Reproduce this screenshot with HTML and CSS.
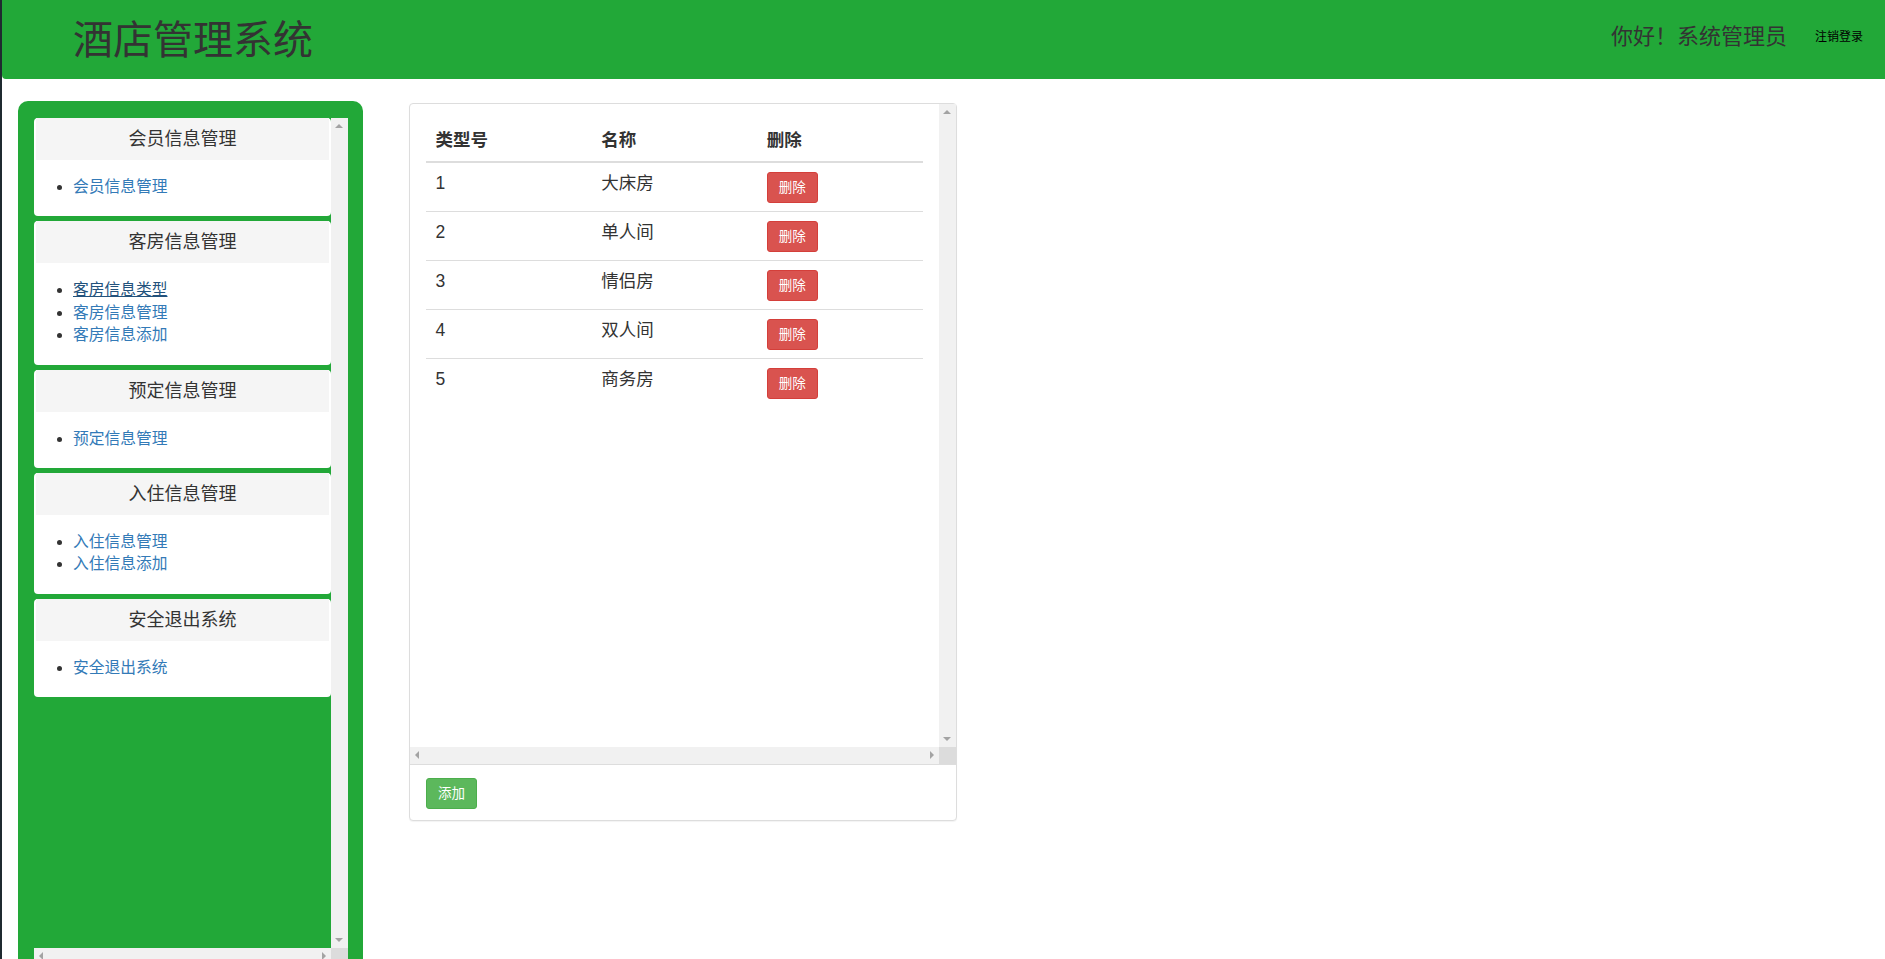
FILE: index.html
```html
<!DOCTYPE html>
<html lang="zh-CN">
<head>
  <meta charset="UTF-8" />
  <title>酒店管理系统</title>
  <link rel="stylesheet" href="styles.css">
</head>
<body>

  <!-- Top bar -->
  <header class="topbar">
    <h1 class="brand">酒店管理系统</h1>
    <div class="user">
      <span class="hello">你好！系统管理员</span>
      <a class="logout" href="#">注销登录</a>
    </div>
  </header>

  <div class="layout">

    <!-- Left menu -->
    <aside class="sidebar">
      <div class="scroll-box side-scroll">
        <div class="scroll-content">
          <div class="menu-panel">
            <div class="menu-heading">会员信息管理</div>
            <ul class="menu-list">
              <li><a href="#">会员信息管理</a></li>
            </ul>
          </div>
          <div class="menu-panel">
            <div class="menu-heading">客房信息管理</div>
            <ul class="menu-list">
              <li><a href="#" class="current">客房信息类型</a></li>
              <li><a href="#">客房信息管理</a></li>
              <li><a href="#">客房信息添加</a></li>
            </ul>
          </div>
          <div class="menu-panel">
            <div class="menu-heading">预定信息管理</div>
            <ul class="menu-list">
              <li><a href="#">预定信息管理</a></li>
            </ul>
          </div>
          <div class="menu-panel">
            <div class="menu-heading">入住信息管理</div>
            <ul class="menu-list">
              <li><a href="#">入住信息管理</a></li>
              <li><a href="#">入住信息添加</a></li>
            </ul>
          </div>
          <div class="menu-panel">
            <div class="menu-heading">安全退出系统</div>
            <ul class="menu-list">
              <li><a href="#">安全退出系统</a></li>
            </ul>
          </div>
        </div>
        <div class="vbar"><span class="arrow up"></span><span class="arrow down"></span></div>
        <div class="hbar"><span class="arrow left"></span><span class="arrow right"></span></div>
        <div class="corner"></div>
      </div>
    </aside>

    <!-- Room type list -->
    <main class="content-panel">
      <div class="scroll-box main-scroll">
        <div class="scroll-content table-wrap">
          <table class="room-table">
            <thead>
              <tr><th>类型号</th><th>名称</th><th>删除</th></tr>
            </thead>
            <tbody>
              <tr><td>1</td><td>大床房</td><td><button class="btn btn-danger">删除</button></td></tr>
              <tr><td>2</td><td>单人间</td><td><button class="btn btn-danger">删除</button></td></tr>
              <tr><td>3</td><td>情侣房</td><td><button class="btn btn-danger">删除</button></td></tr>
              <tr><td>4</td><td>双人间</td><td><button class="btn btn-danger">删除</button></td></tr>
              <tr><td>5</td><td>商务房</td><td><button class="btn btn-danger">删除</button></td></tr>
            </tbody>
          </table>
        </div>
        <div class="vbar"><span class="arrow up"></span><span class="arrow down"></span></div>
        <div class="hbar"><span class="arrow left"></span><span class="arrow right"></span></div>
        <div class="corner"></div>
      </div>
      <div class="panel-footer">
        <button class="btn btn-success">添加</button>
      </div>
    </main>

  </div>
</body>
</html>
```

FILE: styles.css
```css
* {
  box-sizing: border-box;
}

html, body {
  height: 100%;
  overflow: hidden;
}

body {
  margin: 0;
  border-left: 2px solid #1f2a30;
  background: #fff;
  color: #333;
  font-family: "Liberation Sans", "Noto Sans CJK SC", sans-serif;
  font-size: 15.75px;
  line-height: 22.5px;
}

/* top bar */
.topbar {
  height: 79px;
  background: #22a838;
  border-radius: 0 0 0 4px;
  display: flex;
  align-items: center;
  justify-content: space-between;
  padding: 0 22px 0 71px;
}

.brand {
  margin: 0;
  font-size: 40px;
  font-weight: normal;
  line-height: 1;
  color: #333;
}

.user {
  display: flex;
  align-items: center;
  gap: 28px;
  margin-bottom: 5px;
}

.hello {
  font-size: 22px;
  color: #333;
}

.logout {
  font-size: 12px;
  color: #000;
  text-decoration: none;
}

.layout {
  display: flex;
  align-items: flex-start;
  gap: 46px;
  padding-left: 16px;
}

/* sidebar */
.sidebar {
  margin-top: 22px;
  width: 345px;
  flex-shrink: 0;
  background: #22a838;
  border-radius: 10px 10px 0 0;
  padding: 17px 15px 20px 16px;
}

.scroll-box {
  display: grid;
}

.side-scroll {
  grid-template-columns: 297px 17px;
  grid-template-rows: 830px 17px;
}

.scroll-content {
  overflow: hidden;
}

.menu-panel {
  background: #fff;
  border-radius: 4px;
  margin-bottom: 5px;
  padding: 0 2px;
}

.menu-heading {
  height: 42px;
  background: #f5f5f5;
  text-align: center;
  font-size: 18px;
  line-height: 42px;
  color: #333;
}

.menu-list {
  margin: 0;
  padding: 16px 0 17.75px 37px;
}

.menu-list li {
  line-height: 22.5px;
}

.menu-list a {
  color: #337ab7;
  text-decoration: none;
}

.menu-list a.current {
  color: #23527c;
  text-decoration: underline;
}

/* fake scrollbars */
.vbar, .hbar, .corner {
  background: #f1f1f1;
  position: relative;
}

.corner {
  background: #dcdcdc;
}

.arrow {
  position: absolute;
  width: 0;
  height: 0;
  border: 4px solid transparent;
}

.arrow.up {
  top: 6px;
  left: 4px;
  border-bottom-color: #a3a3a3;
  border-top-width: 0;
}

.arrow.down {
  bottom: 6px;
  left: 4px;
  border-top-color: #a3a3a3;
  border-bottom-width: 0;
}

.arrow.left {
  left: 5px;
  top: 4px;
  border-right-color: #a3a3a3;
  border-left-width: 0;
}

.arrow.right {
  right: 5px;
  top: 4px;
  border-left-color: #a3a3a3;
  border-right-width: 0;
}

/* main panel */
.content-panel {
  margin-top: 24px;
  width: 548px;
  flex-shrink: 0;
  border: 1px solid #ddd;
  border-radius: 4px;
  background: #fff;
  box-shadow: 0 1px 1px rgba(0, 0, 0, 0.05);
}

.main-scroll {
  grid-template-columns: 529px 17px;
  grid-template-rows: 643px 17px;
  border-bottom: 1px solid #ddd;
}

.table-wrap {
  padding: 16px;
}

.room-table {
  width: 100%;
  border-collapse: collapse;
  table-layout: fixed;
  font-size: 17.5px;
  line-height: 23px;
}

.room-table th {
  text-align: left;
  font-weight: bold;
  padding: 9px 9.5px;
  border-bottom: 2px solid #ddd;
}

.room-table td {
  padding: 9px 9.5px 8px;
  vertical-align: top;
  border-top: 1px solid #ddd;
}

.room-table tbody tr:first-child td {
  border-top: 0;
}

.btn {
  display: block;
  height: 31px;
  padding: 0 11px;
  border: 1px solid transparent;
  border-radius: 3px;
  color: #fff;
  font-family: inherit;
  font-size: 13.5px;
  line-height: 29px;
  white-space: nowrap;
  cursor: pointer;
}

.btn-danger {
  background: #d9534f;
  border-color: #d43f3a;
}

.btn-success {
  background: #5cb85c;
  border-color: #4cae4c;
}

.panel-footer {
  display: flex;
  padding: 13px 16px 11px;
}
```
